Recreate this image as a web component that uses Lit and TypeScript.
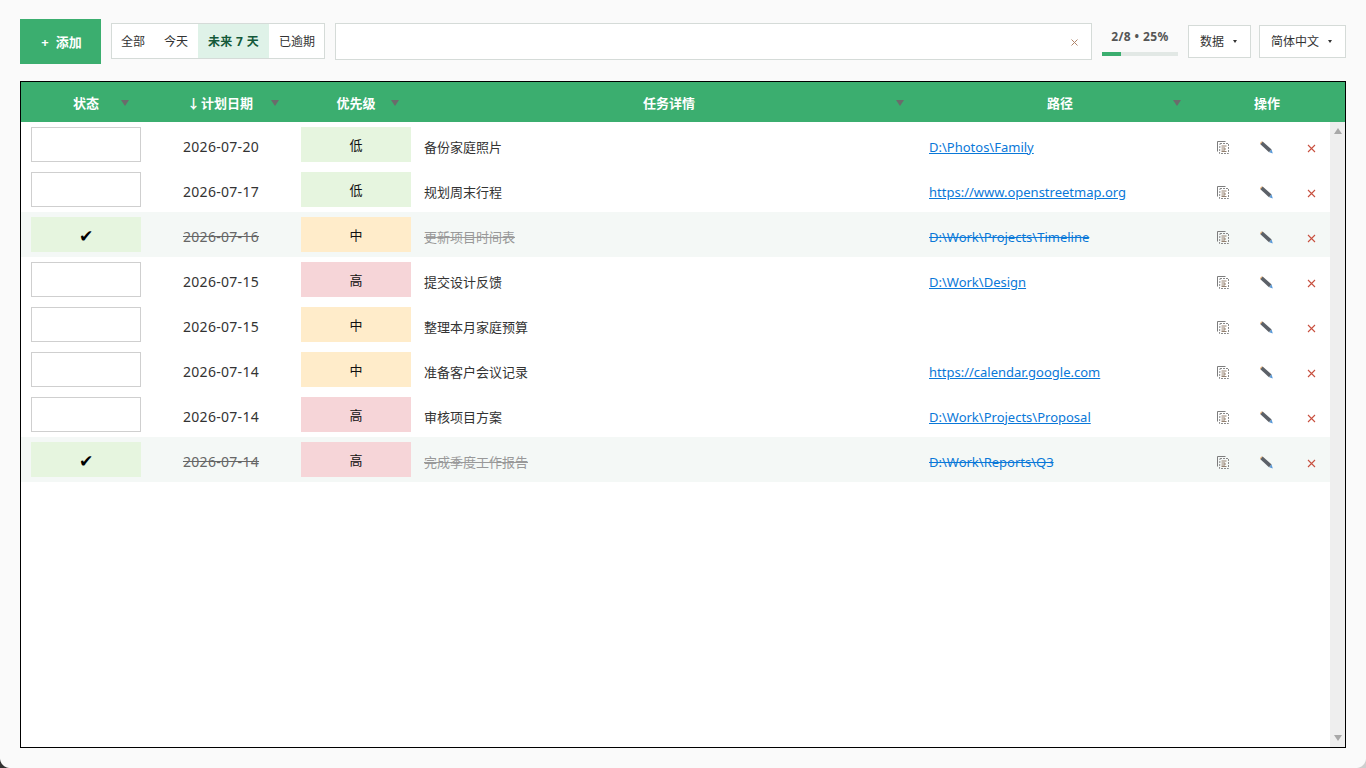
import { LitElement, html, css, svg } from "lit";
import { customElement } from "lit/decorators.js";

type Pri = "low" | "mid" | "high";
interface Row { done: boolean; date: string; pri: Pri; text: string; path: string; }

const ROWS: Row[] = [
  { done: false, date: "2026-07-20", pri: "low", text: "备份家庭照片", path: "D:\\Photos\\Family" },
  { done: false, date: "2026-07-17", pri: "low", text: "规划周末行程", path: "https://www.openstreetmap.org" },
  { done: true, date: "2026-07-16", pri: "mid", text: "更新项目时间表", path: "D:\\Work\\Projects\\Timeline" },
  { done: false, date: "2026-07-15", pri: "high", text: "提交设计反馈", path: "D:\\Work\\Design" },
  { done: false, date: "2026-07-15", pri: "mid", text: "整理本月家庭预算", path: "" },
  { done: false, date: "2026-07-14", pri: "mid", text: "准备客户会议记录", path: "https://calendar.google.com" },
  { done: false, date: "2026-07-14", pri: "high", text: "审核项目方案", path: "D:\\Work\\Projects\\Proposal" },
  { done: true, date: "2026-07-14", pri: "high", text: "完成季度工作报告", path: "D:\\Work\\Reports\\Q3" },
];
const PRI_LABEL: Record<Pri, string> = { low: "低", mid: "中", high: "高" };

const copyIcon = svg`<svg class="ic" width="12" height="13" viewBox="0 0 12 13" fill="none" stroke-width="1">
  <path d="M.5 10.5V.5h8" stroke="#7d7d7d"/>
  <path d="M3 2.5h8.5v10h-9z" stroke="#8a8a8a" stroke-dasharray="2 1"/>
  <path d="M4.5 5h5M4.5 7h3.5v2h-3.5M4.5 10.5h5" stroke="#94806e"/>
</svg>`;
const pencilIcon = svg`<svg class="ic" width="14" height="13" viewBox="0 0 14 13">
  <path d="M2.6 .6 11.6 8.4 9 11.2 .4 3.2z" fill="#5c6168"/>
  <path d="M.4 3.2 2.6 .6 1.6 .4 0 2.2z" fill="#e0a060"/>
  <path d="M9.2 11.2 11.6 8.4 12.8 12.4z" fill="#5a9ad8"/>
</svg>`;
const xIcon = svg`<svg class="ic" width="9" height="9" viewBox="0 0 9 9"><path d="M1 1l7 7M8 1 1 8" stroke="#c8503f" stroke-width="1.1" fill="none"/></svg>`;

@customElement("app-root")
export class AppRoot extends LitElement {
  static styles = css`
    :host { display: block; width: 1366px; height: 768px; background: #fafafa; position: relative; overflow: hidden;
      font-family: "Noto Sans", "Noto Sans CJK SC", sans-serif; font-size: 13px; color: #333; }
    .wrap { display: flex; flex-direction: column; height: 100%; box-sizing: border-box; padding: 19px 20px 20px; }
    .toolbar { display: flex; align-items: center; height: 45px; margin-bottom: 17px; }
    .add { width: 81px; height: 45px; background: #3bae6f; color: #fff; font-weight: 700; font-size: 13px; border: none; display: flex;
      align-items: center; justify-content: center; gap: 7px; font-family: inherit; padding: 0 0 0 2px; }
    .filters { display: flex; height: 36px; margin-left: 10px; margin-top: -1px; border: 1px solid #d5dbd8; background: #fff; box-sizing: border-box; font-size: 12px; }
    .filters span { display: flex; align-items: center; padding: 0 10px 0 9px; }
    .filters .on { background: #dff2e8; color: #14593a; font-weight: 700; padding: 0 10px; letter-spacing: .3px; }
    .filters .last { padding: 0 9px 0 10px; }
    .search { width: 757px; height: 37px; margin-left: 10px; margin-top: -1px; border: 1px solid #d5dbd8; background: #fff; box-sizing: border-box;
      display: flex; align-items: center; justify-content: flex-end; padding-right: 13px; }
    .search svg { margin-top: 2px; }
    .progress { width: 76px; margin-left: 10px; align-self: flex-start; margin-top: 10px; }
    .progress .t { font-size: 12px; font-weight: 700; color: #555; text-align: center; line-height: 16px; height: 18px; letter-spacing: .4px; }
    .bar { height: 4px; background: #e2e8e5; margin-top: 5px; }
    .bar i { display: block; height: 100%; background: #3bae6f; }
    .drop { height: 33px; box-sizing: border-box; border: 1px solid #d5dbd8; background: #fff; margin-left: 10px; margin-top: -1px;
      display: flex; align-items: center; font-size: 12px; padding-left: 11px; gap: 9px; }
    .drop.a { width: 63px; }
    .drop.b { width: 87px; margin-left: 8px; }
    .drop i { width: 0; height: 0; border: 2px solid transparent; border-top: 3px solid #333; border-bottom: 0; margin-top: 1px; }
    .table { flex: 1; min-height: 0; border: 1px solid #000; background: #fff; display: flex; flex-direction: column; }
    .grid { display: grid; grid-template-columns: 130px 140px 130px 496px 286px 127px; }
    .head { height: 40px; background: #3bae6f; color: #fff; font-weight: 700; font-size: 13px; grid-template-columns: 130px 140px 130px 496px 286px 128px; }
    .th { position: relative; display: flex; align-items: center; justify-content: center; box-sizing: border-box; }
    .th .arrow { width: 9px; margin-right: 3px; display: flex; justify-content: center; }
    .th i { position: absolute; top: 18px; right: 22px; width: 0; height: 0; border: 4px solid transparent; border-top: 6px solid #6b6b6b; border-bottom: 0; }
    .th.c2 i { right: 12px; }
    .th.c4 i { right: 13px; }
    .th.c5 i { right: 22px; }
    .main { flex: 1; min-height: 0; display: flex; }
    .rows { flex: 1; min-width: 0; }
    .row { height: 45px; align-items: center; }
    .row.done { background: #f4f8f6; }
    .box { width: 110px; height: 35px; box-sizing: border-box; margin-left: 10px; border: 1px solid #cfcfcf; display: flex; align-items: center; justify-content: center; color: #000; font-family: "DejaVu Sans", sans-serif; font-size: 17px; }
    .done .box { background: #e6f5df; border: none; padding-top: 2px; }
    .date { text-align: center; padding-top: 5px; line-height: 20px; font-size: 14px; letter-spacing: .3px; }
    .pri { width: 110px; height: 35px; margin-left: 10px; display: flex; align-items: center; justify-content: center; color: #111; font-size: 13px; }
    .pri.low { background: #e6f5df; }
    .pri.mid { background: #ffecca; }
    .pri.high { background: #f6d5d8; }
    .text { padding: 4px 0 0 3px; line-height: 20px; color: #333; }
    .done .date { color: #666; text-decoration: line-through; }
    .done .text { color: #999; text-decoration: line-through; }
    .path { padding: 5px 0 0 12px; line-height: 20px; }
    .path a { color: #0a78d8; text-decoration: underline; }
    .done .path a { text-decoration: line-through; }
    .acts { display: flex; padding-top: 5px; }
    .acts span { flex: none; width: 44px; display: flex; align-items: center; justify-content: center; height: 16px; }
    .acts span:first-child { margin-left: -2px; }
    .acts span:last-child svg { margin-top: 2px; }
    .sb { width: 15px; background: #eeeeee; display: flex; flex-direction: column; justify-content: space-between; align-items: center; padding: 6px 0; box-sizing: border-box; }
    .sb i { width: 0; height: 0; border: 4.5px solid transparent; }
    .sb .u { border-bottom: 6px solid #a8a8a8; border-top: 0; }
    .sb .d { border-top: 6px solid #a8a8a8; border-bottom: 0; }
    .corner { position: absolute; bottom: 0; width: 10px; height: 10px; }
    .corner.l { left: 0; background: radial-gradient(circle at 100% 0, transparent 9.5px, #333 10.5px); }
    .corner.r { right: 0; background: radial-gradient(circle at 0 0, transparent 9.5px, #cfcfcf 10.5px); }
  `;

  render() {
    return html`
      <div class="wrap">
        <div class="toolbar">
          <button class="add"><span>+</span><span>添加</span></button>
          <div class="filters">
            <span>全部</span><span>今天</span><span class="on">未来 7 天</span><span class="last">已逾期</span>
          </div>
          <div class="search">
            <svg width="7" height="7" viewBox="0 0 7 7"><path d="M.5.5l6 6M6.5.5l-6 6" stroke="#b0856a" stroke-width="1" fill="none"/></svg>
          </div>
          <div class="progress">
            <div class="t">2/8 • 25%</div>
            <div class="bar"><i style="width:25%"></i></div>
          </div>
          <div class="drop a">数据<i></i></div>
          <div class="drop b">简体中文<i></i></div>
        </div>
        <div class="table">
          <div class="grid head">
            <div class="th c1">状态<i></i></div>
            <div class="th c2"><span class="arrow">↓</span>计划日期<i></i></div>
            <div class="th c3">优先级<i></i></div>
            <div class="th c4">任务详情<i></i></div>
            <div class="th c5">路径<i></i></div>
            <div class="th c6">操作</div>
          </div>
          <div class="main">
            <div class="rows">
              ${ROWS.map(r => html`
                <div class="grid row ${r.done ? "done" : ""}">
                  <div class="box">${r.done ? "✔" : ""}</div>
                  <div class="date">${r.date}</div>
                  <div class="pri ${r.pri}">${PRI_LABEL[r.pri]}</div>
                  <div class="text">${r.text}</div>
                  <div class="path">${r.path ? html`<a>${r.path}</a>` : ""}</div>
                  <div class="acts"><span>${copyIcon}</span><span>${pencilIcon}</span><span>${xIcon}</span></div>
                </div>`)}
            </div>
            <div class="sb"><i class="u"></i><i class="d"></i></div>
          </div>
        </div>
      </div>
      <div class="corner l"></div><div class="corner r"></div>
    `;
  }
}
